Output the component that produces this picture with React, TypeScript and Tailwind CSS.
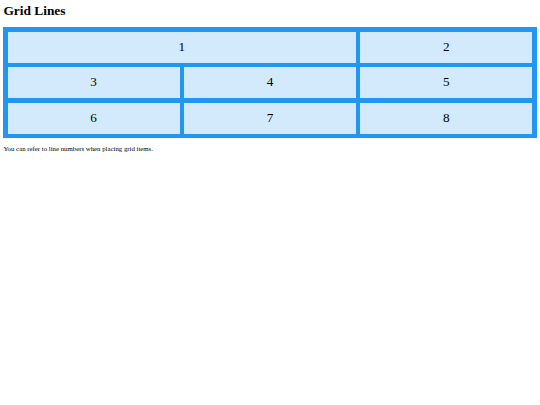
import React from 'react';

const cells = [
  { label: '1', span: true },
  { label: '2' },
  { label: '3' },
  { label: '4' },
  { label: '5' },
  { label: '6' },
  { label: '7' },
  { label: '8' },
];

export default function App() {
  return (
    <div className="min-h-screen bg-white px-[3.4px] pt-[3px] text-black font-['Liberation_Serif',serif]">
      <h1 className="text-[13.4px] font-bold leading-[1.15] mb-[9px]">Grid Lines</h1>

      {/* three equal columns, first item stretches over lines 1 to 3 */}
      <div className="grid grid-cols-3 gap-[4.2px] p-[4.2px] bg-[#2196F3]">
        {cells.map((cell) => (
          <div
            key={cell.label}
            className={`bg-white/80 text-center py-[8.4px] text-[13.2px] leading-[1.1] ${cell.span ? 'col-start-1 col-end-3' : ''}`}
          >
            {cell.label}
          </div>
        ))}
      </div>

      <p className="text-[6.8px] leading-[1.15] mt-[6.7px]">
        You can refer to line numbers when placing grid items.
      </p>
    </div>
  );
}
